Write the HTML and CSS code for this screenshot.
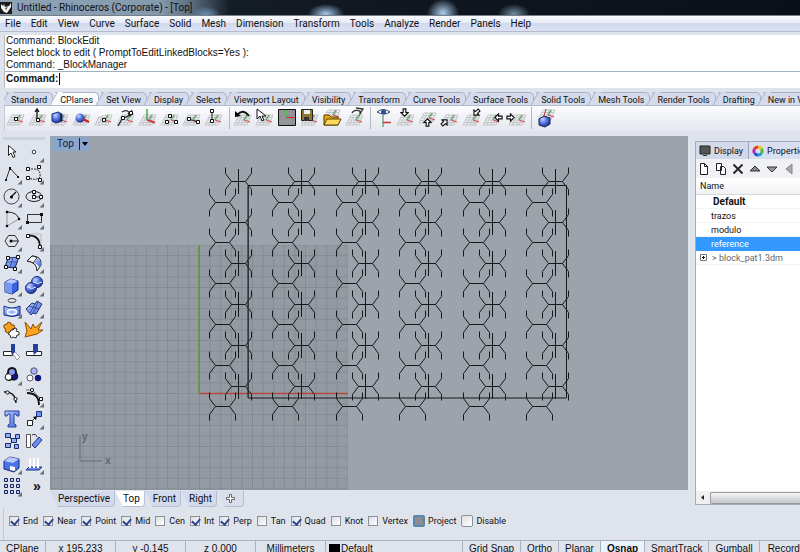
FILE: index.html
```html
<!DOCTYPE html>
<html lang="en">
<head>
  <meta charset="UTF-8">
  <meta name="viewport" content="width=device-width, initial-scale=1.0">
  <title>Untitled - Rhinoceros (Corporate) - [Top]</title>
  <link rel="stylesheet" href="styles.css">
</head>
<body>
  <!-- shared icon parts -->
  <svg class="defs" aria-hidden="true">
    <defs>
      <linearGradient id="blue" x1="0" y1="0" x2="1" y2="1">
        <stop offset="0" stop-color="#b9ccff"/><stop offset="1" stop-color="#3f66dd"/>
      </linearGradient>
      <radialGradient id="ball" cx=".35" cy=".3" r=".8">
        <stop offset="0" stop-color="#c5d4ff"/><stop offset=".5" stop-color="#4a6ee0"/><stop offset="1" stop-color="#14246e"/>
      </radialGradient>
      <symbol id="plane" viewBox="0 0 22 22">
        <path d="M7 8h12l-4 10H2zM5.500 10.500h12.500M4.500 13h12.500M3 15.500h13M10 8l-4.500 10M13 8l-4 10M16 8l-4 10" fill="none" stroke="#b9bbbf" stroke-width=".8"/>
        <path d="M12 13l6 2" stroke="#d85050" stroke-width="1.300"/>
        <path d="M12 13l3-5" stroke="#55a555" stroke-width="1.300"/>
      </symbol>
      <symbol id="fly" viewBox="0 0 22 22"><path d="M21 17v4.500h-4.500z" fill="#6c6f76"/></symbol>
      <symbol id="node" viewBox="0 0 4 4"><path d="M.5 .5h3v3h-3z" fill="#fff" stroke="#111"/></symbol>
      <symbol id="arrow" viewBox="0 0 10 10"><path d="M3.500 1h3v4h2.500L5 9 1 5h2.500z" fill="#fff" stroke="#111" stroke-width="1.300"/></symbol>
    </defs>
  </svg>

  <header class="titlebar">
    <svg class="app-icon" viewBox="0 0 12 12"><path d="M0 0h12v12H0z" fill="#1b1b1b"/><path d="M1 2l2 2 1-2 1 3 4-1 2-3v4L9 8l-2 3-3-1-3-4z" fill="#f2f2f2"/><path d="M5 6l3-1-2 3z" fill="#555"/></svg>
    <span>Untitled - Rhinoceros (Corporate) - [Top]</span>
  </header>

  <nav class="menubar">
    <button>File</button><button>Edit</button><button>View</button><button>Curve</button><button>Surface</button><button>Solid</button><button>Mesh</button><button>Dimension</button><button>Transform</button><button>Tools</button><button>Analyze</button><button>Render</button><button>Panels</button><button>Help</button>
  </nav>

  <section class="command">
    <div class="history">
      <p>Command: BlockEdit</p>
      <p>Select block to edit ( PromptToEditLinkedBlocks=Yes ):</p>
      <p>Command: _BlockManager</p>
    </div>
    <div class="prompt">
      <label for="cmd">Command:</label>
      <span class="caret"></span>
      <input id="cmd" type="text" autocomplete="off">
    </div>
  </section>

  <div class="tabs">
    <button>Standard</button><button class="active">CPlanes</button><button>Set View</button><button>Display</button><button>Select</button><button>Viewport Layout</button><button>Visibility</button><button>Transform</button><button>Curve Tools</button><button>Surface Tools</button><button>Solid Tools</button><button>Mesh Tools</button><button>Render Tools</button><button>Drafting</button><button>New in V5</button>
  </div>

  <div class="toolbar">
    <button aria-label="Set CPlane origin"><svg><use href="#plane"/><use href="#node" x="9" y="10" width="4" height="4"/></svg></button>
    <button aria-label="Set CPlane elevation"><svg><use href="#plane"/><path d="M10 13V3M8 5l2-3 2 3" fill="none" stroke="#111" stroke-width="1.300"/><use href="#node" x="9" y="11" width="4" height="4"/></svg></button>
    <button aria-label="Set CPlane to object"><svg><use href="#plane"/><path d="M3 7l6-2 4 2v7l-6 2-4-2z" fill="url(#ball)" stroke="#1b2d78"/><path d="M12 7v7" stroke="#111"/></svg></button>
    <button aria-label="Set CPlane to surface"><svg><use href="#plane"/><circle cx="9" cy="11" r="4.500" fill="url(#ball)"/><path d="M12 12l6 3" stroke="#c22" stroke-width="2"/></svg></button>
    <button aria-label="Set CPlane perpendicular to curve"><svg><use href="#plane"/><path d="M6 8q6-1 9-4" fill="none" stroke="#fff" stroke-width="2"/><use href="#node" x="9" y="11" width="4" height="4"/></svg></button>
    <button aria-label="Rotate CPlane"><svg><use href="#plane"/><path d="M3 19l4-7 6-3 4-6M7 5q6-4 8 3M13 6l2 3 3-3" fill="none" stroke="#222" stroke-width="1.200"/><use href="#node" x="6" y="9" width="4" height="4"/><use href="#node" x="14" y="4" width="4" height="4"/></svg></button>
    <button aria-label="Set CPlane vertical"><svg><use href="#plane"/><path d="M10 13V2" stroke="#46a84b" stroke-width="1.500"/><path d="M10 13l8 3" stroke="#d03a3a" stroke-width="1.500"/></svg></button>
    <button aria-label="Set CPlane by 3 points"><svg><use href="#plane"/><use href="#node" x="9" y="7" width="4" height="4"/><use href="#node" x="6" y="13" width="4" height="4"/><use href="#node" x="15" y="13" width="4" height="4"/></svg></button>
    <button aria-label="Set CPlane X axis"><svg><use href="#plane"/><path d="M8 12l8 3" stroke="#222"/><use href="#node" x="6" y="10" width="4" height="4"/><use href="#node" x="15" y="13" width="4" height="4"/></svg></button>
    <button aria-label="Set CPlane Z axis"><svg><use href="#plane"/><path d="M9 13V4" stroke="#222"/><use href="#node" x="7" y="2" width="4" height="4"/><use href="#node" x="7" y="12" width="4" height="4"/></svg></button>
    <i class="sep"></i>
    <button aria-label="Previous CPlane"><svg><use href="#plane"/><path d="M5 8q6-7 12 1" fill="none" stroke="#111" stroke-width="1.800"/><path d="M3 4v6l6-1z"/></svg></button>
    <button aria-label="Select named CPlane"><svg><use href="#plane"/><path d="M3 2v10l3-3 2 5 2-1-2-4h4z" fill="#fff" stroke="#111"/></svg></button>
    <button aria-label="Grid options" class="wide"><svg><path d="M2.500 2.500h17v16h-17z" fill="#8f9193" stroke="#111"/><path d="M3 6.500h16M3 10.500h16M3 14.500h16M6.500 3v15M10.500 3v15M14.500 3v15" stroke="#9ea0a2" stroke-width=".6"/><path d="M10.500 10.500V3" stroke="#4eb854"/><path d="M10.500 10.500H19" stroke="#d22"/></svg></button>
    <button aria-label="Save CPlane"><svg><use href="#plane"/><path d="M2.500 2.500h11v11h-11z" fill="#877a2c" stroke="#222"/><path d="M5 3h6v4H5z" fill="#eee"/><path d="M5 10h5v4H5z" fill="#333"/></svg></button>
    <button aria-label="Open CPlane" class="wide"><svg><use href="#plane" y="-5"/><path d="M3 18V8h5l2 2h7v8z" fill="#e7a90d" stroke="#5a4205"/><path d="M3 18l3-6h14l-3 6z" fill="#ffd95a" stroke="#5a4205"/></svg></button>
    <button aria-label="Next CPlane"><svg><use href="#plane"/><path d="M8 6q2-4 8-2v3l3-5-7-1" fill="none" stroke="#333" stroke-width="1.300"/></svg></button>
    <i class="sep"></i>
    <button aria-label="Set CPlane to view"><svg><path d="M10 15.500h8" stroke="#c33" stroke-width="1.500"/><path d="M10 8v12" stroke="#3d7d4a"/><path d="M4 5q6-5 13 0-6 4-13 0z" fill="#fff" stroke="#444"/><circle cx="10.500" cy="5" r="2.500" fill="#274bb5"/></svg></button>
    <button aria-label="World top"><svg><use href="#plane"/><use href="#arrow" x="5" y="1" width="9" height="9"/></svg></button>
    <button aria-label="World bottom"><svg><use href="#plane" y="-2"/><use href="#arrow" x="6" y="11" width="9" height="9" transform="rotate(180 10.500 15.500)"/></svg></button>
    <button aria-label="World front"><svg><use href="#plane"/><use href="#arrow" x="1" y="11" width="9" height="9" transform="rotate(225 5.500 15.500)"/></svg></button>
    <button aria-label="World back"><svg><use href="#plane"/><use href="#arrow" x="11" y="1" width="9" height="9" transform="rotate(45 15.500 5.500)"/></svg></button>
    <button aria-label="World right"><svg><use href="#plane" x="-2"/><use href="#arrow" x="11" y="6" width="9" height="9" transform="rotate(90 15.500 10.500)"/></svg></button>
    <button aria-label="World left"><svg><use href="#plane" x="2"/><use href="#arrow" x="1" y="6" width="9" height="9" transform="rotate(270 5.500 10.500)"/></svg></button>
    <i class="sep"></i>
    <button aria-label="Mobile CPlane"><svg><use href="#plane" y="-5" x="2"/><path d="M5 12l5-3 6 2v6l-5 3-6-2z" fill="url(#ball)" stroke="#1b1b5c"/><path d="M10 9l2-7" stroke="#b33"/></svg></button>
  </div>

  <main class="work">
    <aside class="palette">
      <button aria-label="Select"><svg><path d="M7.500 4.500v10l2.500-2.500 2 4.500 2-1-2-4.500h3z" fill="#fff" stroke="#222"/></svg></button>
      <button aria-label="Point"><svg><circle cx="11" cy="11" r="1.800" fill="#fff" stroke="#333"/><use href="#fly"/></svg></button>
      <button aria-label="Polyline"><svg><path d="M5 17l4-12 8 9" fill="none" stroke="#333"/><path d="M4 16h2v2H4zM8 4h2v3H8zM16 13h2v2h-2z" fill="#111"/><use href="#fly"/></svg></button>
      <button aria-label="Curve"><svg><path d="M5 6h6q7 0 6 8M17 14q-3 4-12 1" fill="none" stroke="#222" stroke-dasharray="2 1"/><use href="#node" x="3" y="4" width="4" height="4"/><use href="#node" x="14" y="2" width="4" height="4"/><use href="#node" x="3" y="13" width="4" height="4"/><use href="#node" x="15" y="15" width="4" height="4"/><use href="#fly"/></svg></button>
      <button aria-label="Circle"><svg><circle cx="10.500" cy="10.500" r="7.500" fill="none" stroke="#444"/><path d="M10 11l5-5" stroke="#111" stroke-width="1.300"/><circle cx="10.500" cy="11" r="1.500"/><use href="#fly"/></svg></button>
      <button aria-label="Ellipse"><svg><ellipse cx="11" cy="10.500" rx="8" ry="5" fill="none" stroke="#222"/><path d="M11 5v6h7" fill="none" stroke="#222"/><use href="#node" x="9" y="4" width="4" height="4"/><use href="#node" x="9" y="9" width="4" height="4"/><use href="#node" x="16" y="9" width="4" height="4"/><use href="#fly"/></svg></button>
      <button aria-label="Arc"><svg><path d="M6 18V4M6 18l12-7" fill="none" stroke="#999"/><path d="M6 4q10 0 12 7" fill="none" stroke="#222"/><circle cx="6" cy="4" r="1.300"/><circle cx="6" cy="18" r="1.300"/><circle cx="18" cy="11" r="1.300"/><use href="#fly"/></svg></button>
      <button aria-label="Rectangle"><svg><path d="M4.500 6.500h14v8h-14z" fill="none" stroke="#333"/><path d="M3 13h3v3H3zM17 5h3v3h-3z" fill="#111"/><use href="#fly"/></svg></button>
      <button aria-label="Polygon"><svg><path d="M4 11l3.500-5.500h6.500l3.500 5.500-3.500 5.500H7.500z" fill="none" stroke="#333"/><path d="M10 11h7" stroke="#111"/><circle cx="10" cy="11" r="1.500"/><use href="#fly"/></svg></button>
      <button aria-label="Fillet"><svg><path d="M4 5.500q13-1 13 12" fill="none" stroke="#111" stroke-width="1.800"/><path d="M8 4h10v10" fill="none" stroke="#bbb"/><use href="#node" x="3" y="4" width="4" height="4"/><use href="#node" x="15" y="15" width="4" height="4"/><use href="#fly"/></svg></button>
      <button aria-label="Surface from points"><svg><path d="M7 6l11-1-4 11-10-1z" fill="url(#blue)" stroke="#15245f"/><path d="M12 5l-3 11M6 10h10" stroke="#3c50a0"/><use href="#node" x="5" y="4" width="4" height="4"/><use href="#node" x="15" y="3" width="4" height="4"/><use href="#node" x="3" y="13" width="4" height="4"/><use href="#node" x="12" y="15" width="4" height="4"/><use href="#fly"/></svg></button>
      <button aria-label="Sweep"><svg><path d="M4 9l5-5q10 0 9 9l-4 6q0-9-10-10z" fill="#fff" stroke="#222"/><path d="M9 4q3 0 5 2l-4 5q-3-2-6-2z" fill="#f4f6ff" stroke="#222"/><path d="M14 6q4 2 4 7l-2 3q0-3-5-5z" fill="url(#blue)"/><use href="#fly"/></svg></button>
      <button aria-label="Box"><svg><path d="M4 7l6-3 7 2v9l-6 4-7-2z" fill="#3862de" stroke="#142a80"/><path d="M4 7l6-3 7 2-6 3z" fill="#b7c9ff"/><path d="M4 7l7 2v10l-7-2z" fill="#7898f0"/><use href="#fly"/></svg></button>
      <button aria-label="Boolean union"><svg><circle cx="14" cy="7" r="5.500" fill="url(#ball)" stroke="#1b2d78"/><circle cx="8" cy="13" r="5.500" fill="url(#ball)" stroke="#1b2d78"/><path d="M4 12q5 3 9 0M10 7q5 3 9 0" fill="none" stroke="#dfe7ff"/><use href="#fly"/></svg></button>
      <button aria-label="Project curve"><svg><ellipse cx="11" cy="3.500" rx="4" ry="2" fill="none" stroke="#444"/><path d="M3 9q8 4 16 0v9q-8 3-16 0z" fill="url(#blue)" stroke="#173183"/><ellipse cx="11" cy="15" rx="4.500" ry="2.500" fill="#9fb8ff" stroke="#fff" stroke-width="1.500"/><use href="#fly"/></svg></button>
      <button aria-label="Mesh"><svg><path d="M3 12l6-6 3 1 2-3 5 3-6 10-3-1-2 2z" fill="url(#blue)" stroke="#24377e"/><path d="M6 9l10 3M12 7l-5 9M15 5l-5 11" fill="none" stroke="#24377e" stroke-width=".8"/><use href="#fly"/></svg></button>
      <button aria-label="Join"><svg><path d="M3 6l3-1 1-2 3 1 0 2 3 0 1 3-3 1 0 3-3 0-2 1-2-2 1-2-2-1z" fill="#f5a021" stroke="#7a4b00"/><path d="M10 11l2 0 2-2 2 1-1 2 3 1 0 3-2 0-1 3-3-1-2 1-1-3-2-1 2-2z" fill="#fff" stroke="#333"/></svg></button>
      <button aria-label="Explode"><svg><path d="M2 3l6 7 2-5 2 4 7-6-4 8h5l-6 4-12 3 2-6z" fill="#ffa51e" stroke="#8a4d00"/></svg></button>
      <button aria-label="Trim"><svg><path d="M2.500 10.500h9v4h-9z" fill="#fff" stroke="#222"/><path d="M10 3h4v8l-3 3-1-3z" fill="#25409c"/><path d="M12 13l2-2 5 5-3 3z" fill="#fff" stroke="#999"/></svg></button>
      <button aria-label="Split"><svg><path d="M3.500 10.500h15v4h-15z" fill="#fff" stroke="#222"/><path d="M10 3h5v7l-4 4-1-4z" fill="#25409c"/></svg></button>
      <button aria-label="Group"><svg><path d="M11 3q5 0 5 6 3 4-1 7-3 1-4 0-3 2-6 0-3-3 1-7 0-6 5-6z" fill="#111"/><circle cx="11" cy="8" r="3" fill="#8b98ee"/><circle cx="7.500" cy="13" r="2.800" fill="#fff"/><circle cx="14" cy="13" r="2.800" fill="#10157a"/><use href="#fly"/></svg></button>
      <button aria-label="Ungroup"><svg><circle cx="11" cy="7" r="3.200" fill="#a9b4f5" stroke="#556"/><circle cx="7" cy="14" r="3" fill="#fff" stroke="#556"/><circle cx="15" cy="14" r="3.200" fill="#10157a"/></svg></button>
      <button aria-label="Edit points"><svg><path d="M3 6q11-1 12 11" fill="none" stroke="#111" stroke-width="1.500"/><circle cx="6.500" cy="6.500" r="1.600" fill="#fff" stroke="#111"/><circle cx="14.500" cy="13" r="1.600" fill="#fff" stroke="#111"/></svg></button>
      <button aria-label="Control points"><svg><path d="M4 7q12 0 12 12" fill="none" stroke="#111" stroke-width="1.800"/><path d="M3 4h6l9 9" fill="none" stroke="#777"/><circle cx="9" cy="4" r="1.600" fill="#fff" stroke="#111"/><use href="#node" x="16" y="11" width="4" height="4"/><use href="#fly"/></svg></button>
      <button aria-label="Text"><svg><path d="M4 3h14v5h-2l-1-2h-2v10l2 1v2H7v-2l2-1V6H7L6 8H4z" fill="url(#blue)" stroke="#25409c"/></svg></button>
      <button aria-label="Scale"><svg><path d="M8 14l6-6" stroke="#222"/><path d="M14 8l-4 1 3 3z"/><path d="M4.500 12.500h5v5h-5z" fill="#fff" stroke="#222"/><path d="M13.500 3.500h5v5h-5z" fill="#6d8ef2" stroke="#1c307e"/><use href="#fly"/></svg></button>
      <button aria-label="Block"><svg><path d="M4.500 3.500h5v4h-5zM10.500 8.500h5v4h-5zM4.500 13.500h5v4h-5zM13.500 14.500h4v4h-4zM14.500 4.500h4v4h-4z" fill="#94adf7" stroke="#1c2d6f"/><path d="M9 8l2 1M9 14l2-2" stroke="#222"/></svg></button>
      <button aria-label="Align"><svg><path d="M3.500 4.500h4v13h-4z" fill="#fff" stroke="#555"/><path d="M9 15l7-8 3 3-7 8z" fill="#6d8ef2" stroke="#1c307e"/><path d="M9 5q4-2 5 2" fill="none" stroke="#333"/></svg></button>
      <button aria-label="Cap holes"><svg><path d="M3 8l6-4 9 2v9l-5 4-10-3z" fill="#4b73e6" stroke="#142a80"/><path d="M3 8l6-4 9 2-6 4z" fill="#b7c9ff"/><path d="M9 13l5 1v4l-5-1z" fill="#fff"/><use href="#fly"/></svg></button>
      <button aria-label="Set points"><svg><path d="M3 17l3-3h13l-3 3z" fill="#6d8ef2" stroke="#1c307e"/><path d="M7 5v10M11 5v10M15 5v10" stroke="#fff" stroke-width="2"/><path d="M5 12h4l-2 3zM9 12h4l-2 3zM13 12h4l-2 3z" fill="#fff"/><use href="#fly"/></svg></button>
      <button aria-label="Array"><svg><path d="M3.500 3.500h3v3h-3zM9.500 3.500h3v3h-3zM15.500 3.500h3v3h-3zM3.500 9.500h3v3h-3zM9.500 9.500h3v3h-3zM15.500 9.500h3v3h-3zM3.500 15.500h3v3h-3zM9.500 15.500h3v3h-3zM15.500 15.500h3v3h-3z" fill="#c9d5ff" stroke="#15225c"/><use href="#fly"/></svg></button>
      <button class="more">»</button>
    </aside>

    <section class="center">
      <div class="viewport">
        <svg class="scene" id="scene">
          <defs>
            <pattern id="grid" x="149" y="257" width="10.600" height="10.600" patternUnits="userSpaceOnUse">
              <path d="M2.600 0v10.600M4.700 0v10.600M6.800 0v10.600M8.900 0v10.600M0 2.600h10.600M0 4.700h10.600M0 6.800h10.600M0 8.900h10.600" stroke="#8e949c" stroke-width=".5"/>
              <path d="M.5 0v10.600M0 .5h10.600" stroke="#818890" stroke-width=".9"/>
            </pattern>
          </defs>
          <rect x="0" y="109" width="298" height="245" fill="#989ea6"/>
          <rect x="0" y="109" width="298" height="245" fill="url(#grid)"/>
          <path d="M149.500 257.500h148" stroke="#b3463d" stroke-width="1.500"/>
          <path d="M149 109v149" stroke="#4f9a3c" stroke-width="1.500"/>
          <path d="M30 300v25h22" fill="none" stroke="#666c74"/>
          <text x="32" y="304">y</text>
          <text x="55" y="328">x</text>
          <g id="pattern" fill="none" stroke="#15181b"></g>
          <path d="M198 49.500h318.500v212.500h-318.500z" fill="none" stroke="#15181b"/>
          <path d="M198.500 50v212" stroke="#33373c"/>
        </svg>
        <button class="view-title"><span>Top</span><i></i></button>
      </div>
      <div class="view-tabs">
        <button>Perspective</button><button class="active">Top</button><button>Front</button><button>Right</button><button class="add" aria-label="Add viewport"><svg viewBox="0 0 9 9"><path d="M3.500 .5h2v3h3v2h-3v3h-2v-3h-3v-2h3z" fill="#fff" stroke="#666"/></svg></button>
      </div>
    </section>

    <aside class="panel">
      <div class="panel-tabs">
        <button><svg viewBox="0 0 12 12"><path d="M1 1h10v8H1z" fill="#555" stroke="#222"/><path d="M4 10h4v1H4z" fill="#333"/></svg>Display</button>
        <button><svg viewBox="0 0 12 12"><g fill="none" stroke-width="3"><path d="M6 2a4 4 0 0 1 3.500 2" stroke="#f6c20d"/><path d="M9.500 4a4 4 0 0 1 0 4" stroke="#55b82c"/><path d="M9.500 8A4 4 0 0 1 6 10" stroke="#17a5c8"/><path d="M6 10a4 4 0 0 1-3.500-2" stroke="#2f4fe0"/><path d="M2.500 8a4 4 0 0 1 0-4" stroke="#c122b0"/><path d="M2.500 4A4 4 0 0 1 6 2" stroke="#ee3322"/></g></svg>Properties</button>
      </div>
      <div class="panel-tools">
        <button aria-label="New layer"><svg viewBox="0 0 12 12"><path d="M2.500 .5h4l3 3v8h-7z" fill="#fff" stroke="#222"/><path d="M6.500 .5v3h3" fill="none" stroke="#222"/></svg></button>
        <button aria-label="New sublayer"><svg viewBox="0 0 12 12"><path d="M1.500 .5h5v7h-5zM5.500 3.500h3l2 2v6h-5z" fill="#fff" stroke="#222"/></svg></button>
        <button aria-label="Delete layer"><svg viewBox="0 0 12 12"><path d="M1.500 1.500l9 9M10.500 1.500l-9 9" stroke="#222" stroke-width="1.800"/></svg></button>
        <button aria-label="Move up"><svg viewBox="0 0 12 12"><path d="M6 3l5 5H1z" fill="#888" stroke="#333"/></svg></button>
        <button aria-label="Move down"><svg viewBox="0 0 12 12"><path d="M6 9L1 4h10z" fill="#999" stroke="#333"/></svg></button>
        <button aria-label="Move out"><svg viewBox="0 0 12 12"><path d="M3 6l6-5v10z" fill="#aaa" stroke="#888"/></svg></button>
        <button aria-label="Filter"><svg viewBox="0 0 12 12"><path d="M1 1h9L7 6v5L5 9V6z" fill="#ddd" stroke="#333"/></svg></button>
      </div>
      <div class="panel-head">Name</div>
      <ul class="layers">
        <li class="current">Default</li>
        <li>trazos</li>
        <li>modulo</li>
        <li class="selected">reference</li>
        <li class="linked"><button aria-label="Expand"><svg viewBox="0 0 7 7"><path d="M.5 .5h6v6h-6z" fill="#fff" stroke="#777"/><path d="M2 3.500h3M3.500 2v3" stroke="#111"/></svg></button>&gt; block_pat1.3dm</li>
      </ul>
      <div class="hscroll"><button aria-label="Scroll left"><svg viewBox="0 0 5 7"><path d="M4 1v5L1 3.500z" fill="#222"/></svg></button><div class="thumb"></div></div>
    </aside>
  </main>

  <div class="osnap">
    <label><input type="checkbox" checked>End</label>
    <label><input type="checkbox" checked>Near</label>
    <label><input type="checkbox" checked>Point</label>
    <label><input type="checkbox" checked>Mid</label>
    <label><input type="checkbox">Cen</label>
    <label><input type="checkbox" checked>Int</label>
    <label><input type="checkbox" checked>Perp</label>
    <label><input type="checkbox">Tan</label>
    <label><input type="checkbox" checked>Quad</label>
    <label><input type="checkbox">Knot</label>
    <label><input type="checkbox">Vertex</label>
    <label class="big"><input type="checkbox" class="mixed">Project</label>
    <label class="big"><input type="checkbox">Disable</label>
  </div>

  <footer class="status">
    <button class="cplane">CPlane</button>
    <span class="coord">x 195.233</span>
    <span class="coord">y -0.145</span>
    <span class="coord">z 0.000</span>
    <span class="coord">Millimeters</span>
    <button class="layer"><i></i>Default</button>
    <button>Grid Snap</button>
    <button>Ortho</button>
    <button>Planar</button>
    <button class="on">Osnap</button>
    <button>SmartTrack</button>
    <button>Gumball</button>
    <button>Record History</button>
  </footer>

  <script>
    const NS = 'http://www.w3.org/2000/svg';
    const pattern = document.getElementById('pattern');
    const arms = 'M-13 -14v6l6 8h14l6 -8v-6M-13 14v-6l6 -8M7 0l6 8v6';

    function addMotif(x, y, withBar) {
      const path = document.createElementNS(NS, 'path');
      path.setAttribute('d', withBar ? arms + 'M0 -12.500v25' : arms);
      path.setAttribute('transform', `translate(${x} ${y})`);
      pattern.appendChild(path);
    }

    for (let col = 0; col < 6; col++) {
      for (let row = 0; row < 6; row++) {
        addMotif(Math.round(188 + col * 63.4) + 0.5, Math.round(45 + row * 40.9) + 0.5, true);
        addMotif(Math.round(172 + col * 63.4) + 0.5, Math.round(65.500 + row * 40.9) + 0.5, false);
      }
    }
  </script>
</body>
</html>
```
FILE: styles.css
```css
* { box-sizing: border-box; }
body {
  margin: 0; height: 100vh; overflow: hidden;
  display: flex; flex-direction: column;
  font-family: Roboto, "Liberation Sans", sans-serif; font-size: 10px; line-height: 12px;
  color: #111; background: #dfe3ec; white-space: nowrap;
}
button {
  border: 0; padding: 0; margin: 0; background: none;
  font: inherit; color: inherit; flex: none;
}
.defs { width: 0; height: 0; position: absolute; }

.titlebar {
  flex: none; height: 16px; display: flex; align-items: center; gap: 5px;
  border-bottom: 1px solid #777f8a;
  background:
    radial-gradient(ellipse 14px 9px at 206px 15px, #6c93b8, transparent),
    radial-gradient(ellipse 18px 10px at 326px 14px, #a5caee, transparent),
    radial-gradient(ellipse 16px 14px at 443px 13px, #a9cdec, transparent),
    radial-gradient(ellipse 16px 10px at 514px 14px, #6d8f9f, transparent),
    linear-gradient(90deg, #8fa3b5 0, #8499ac 160px, #5a6c7e 192px, #141c26 230px, #10161f 420px, #0b1018 100%);
}
.app-icon { width: 12px; height: 12px; }

.menubar {
  flex: none; height: 16px; padding: 0 5px; display: flex; align-items: center; gap: 10px;
  background: linear-gradient(#fafbfe, #e6eaf6 45%, #d3daee 50%, #dce2f4);
  border-bottom: 1px solid #b4bbcd;
}

.command {
  flex: none; margin: 3px 0 0 4px; padding-bottom: 2px;
  background: #fff; border-left: 1px solid #b4bac6;
  font-family: "Liberation Sans", Arial, sans-serif;
}
.history { padding: 0 1px; border-bottom: 1px solid #9fb0c0; }
.history p { margin: 0; }
.prompt { display: flex; align-items: center; height: 14px; padding-left: 1px; font-weight: bold; }
.caret { width: 1px; height: 12px; margin-left: 1px; background: #000; }
.prompt input { flex: 1; min-width: 0; height: 12px; border: 0; padding: 0; font: inherit; outline: 0; }

.tabs {
  flex: none; height: 14px; margin: 4px 0 0 4px; padding-left: 2px; display: flex; overflow: hidden;
  border-bottom: 1px solid #b4bbc9; font-size: 9px;
}
.tabs button {
  position: relative; height: 14px; padding: 0 5px; margin-right: 2px;
  border-top: 1px solid #abb2c3; border-right: 1px solid #abb2c3; border-radius: 0 5px 0 0;
  background: #d5dbeb;
}
.tabs button::before {
  content: ""; position: absolute; left: -2px; top: -1px; width: 5px; height: 14px;
  border-left: 1px solid #abb2c3; background: #d5dbeb; transform: skewX(-30deg);
}
.tabs button.active, .tabs button.active::before { background: #fbfcfe; }

.toolbar {
  flex: none; height: 25px; margin-left: 4px; padding-bottom: 2px; display: flex; align-items: center;
  background: linear-gradient(#fbfcfd, #e4e7ef);
  border-left: 1px solid #c6cbd6;
}
.toolbar button, .palette button { width: 22px; height: 22px; }
.toolbar svg { display: block; width: 22px; height: 22px; }
.toolbar .wide { width: 23px; }
.sep { width: 1px; height: 22px; margin: 0 2px 0 4px; background: #b3b7c0; }

.work { flex: 1; min-height: 0; display: flex; padding-top: 5px; }
.palette {
  flex: none; width: 50px; padding: 5px 5px 11px 1px; display: grid;
  grid-template-columns: 22px 22px; grid-auto-rows: 1fr; align-items: center;
  position: relative;
}
.palette::before { content: ""; position: absolute; left: 3px; right: 5px; top: 1px; height: 3px; background: #ccd1db; }
.palette svg { display: block; width: 22px; height: 22px; }
.palette .more { font: bold 14px "Liberation Sans", sans-serif; padding-left: 6px; text-align: center; }

.center { flex: 1; min-width: 0; display: flex; flex-direction: column; }
.viewport { flex: 1; min-height: 0; position: relative; background: #9da3ab; overflow: hidden; }
.scene { display: block; width: 100%; height: 100%; }
.scene text { font: bold 10px "Open Sans", sans-serif; fill: #666c74; }
.view-title {
  position: absolute; left: 1px; top: 1px; height: 14px; padding: 0 2px 0 6px;
  display: flex; align-items: center; gap: 5px;
  color: #16233c; background: #8ba5cb;
}
.view-title i { width: 8px; height: 12px; border-left: 1px solid #222; position: relative; }
.view-title i::after {
  content: ""; position: absolute; left: 2px; top: 4px;
  border: 3px solid transparent; border-top: 4px solid #000; border-bottom: 0;
}
.view-tabs { flex: none; height: 18px; padding-top: 1px; display: flex; }
.view-tabs button {
  height: 16px; padding: 0 4px 0 8px;
  border: 1px solid #b5bdd0; border-top: 0; border-left: 0; border-radius: 0 0 4px 0; background: #d3daed;
  clip-path: polygon(0 0, 100% 0, 100% 100%, 8px 100%);
}
.view-tabs .active { background: #fff; }
.view-tabs .add { padding: 0 8px 0 9px; background: #d9deea; }
.view-tabs svg { display: block; width: 9px; height: 9px; }

.panel {
  flex: none; width: 105px; margin: 5px 0 3px 7px; display: flex; flex-direction: column; overflow: hidden;
  background: #fff; border: 1px solid #a3aab8; border-right: 0;
}
.panel-tabs { flex: none; height: 17px; display: flex; background: #dfe3ec; font-size: 9px; }
.panel-tabs button { display: flex; align-items: center; gap: 3px; padding: 0 5px 0 3px; background: #d2d9ea; border-right: 1px solid #9ca5b8; }
.panel-tabs button + button { background: #d9dff0; }
.panel-tabs svg { width: 12px; height: 12px; }
.panel-tools { flex: none; height: 19px; padding-left: 2px; display: flex; align-items: center; gap: 5px; background: #f0f1f4; }
.panel-tools button { width: 12px; height: 12px; }
.panel-tools svg { display: block; width: 12px; height: 12px; }
.panel-head { flex: none; height: 17px; padding: 2px 4px; border-bottom: 1px solid #d5d8de; background: linear-gradient(#fff, #f1f2f4); font-size: 9px; }
.layers { flex: 1; margin: 0; padding: 0; list-style: none; font-size: 9px; }
.layers li { height: 14px; line-height: 14px; padding-left: 15px; border-bottom: 1px solid #f2f3f5; }
.layers .current { font-weight: bold; padding-left: 17px; font-size: 10px; }
.layers .selected { background: #3399ff; color: #fff; border-color: #3399ff; }
.layers .linked { padding-left: 4px; color: #666; display: flex; align-items: center; gap: 5px; }
.layers svg { display: block; width: 7px; height: 7px; }
.hscroll { flex: none; height: 13px; display: flex; align-items: center; gap: 5px; padding-left: 4px; background: #f0f0f1; }
.hscroll svg { display: block; width: 5px; height: 7px; }
.thumb { flex: 1; height: 12px; border: 1px solid #989ba2; border-right: 0; border-radius: 2px 0 0 2px; background: linear-gradient(#f6f6f7, #dcdde0 50%, #c5c7cb); }

.osnap {
  flex: none; height: 32px; margin-left: 3px; padding: 0 5px 7px; display: flex; align-items: center; gap: 5px;
  border-left: 1px solid #c0c5d0; font-size: 9px;
}
.osnap label { display: flex; align-items: center; gap: 4px; }
.osnap input {
  appearance: none; width: 10px; height: 10px; margin: 0; position: relative;
  border: 1px solid #8d9199; background: linear-gradient(135deg, #dcdee1, #fff);
}
.osnap input:checked::after {
  content: ""; position: absolute; left: 2px; top: 0; width: 4px; height: 6px;
  border: solid #2e4390; border-width: 0 2px 2px 0; transform: rotate(40deg);
}
.osnap .big { gap: 3px; }
.osnap .big input { width: 12px; height: 12px; border-radius: 2px; }
.osnap .big .mixed { background: #8b8d90; border: 2px solid #5788b0; }

.status {
  flex: none; height: 12px; display: flex; overflow: hidden;
  border-top: 1px solid #a9b1c0; font-family: "Liberation Sans", Arial, sans-serif;
}
.status > * { flex: none; height: 15px; padding: 0 6px; line-height: 15px; text-align: center; border-right: 1px solid #a9b1c0; }
.status .cplane { width: 46px; padding: 0 4px; }
.status .coord { width: 70px; padding: 0 4px; }
.status .layer { width: 137px; display: flex; align-items: center; padding: 0 3px; gap: 1px; }
.status .layer i { width: 11px; height: 10px; background: #000; }
.status .on { font-weight: bold; background: #e9f4fd; }
.status button:last-child { padding: 0 8px; }
```
